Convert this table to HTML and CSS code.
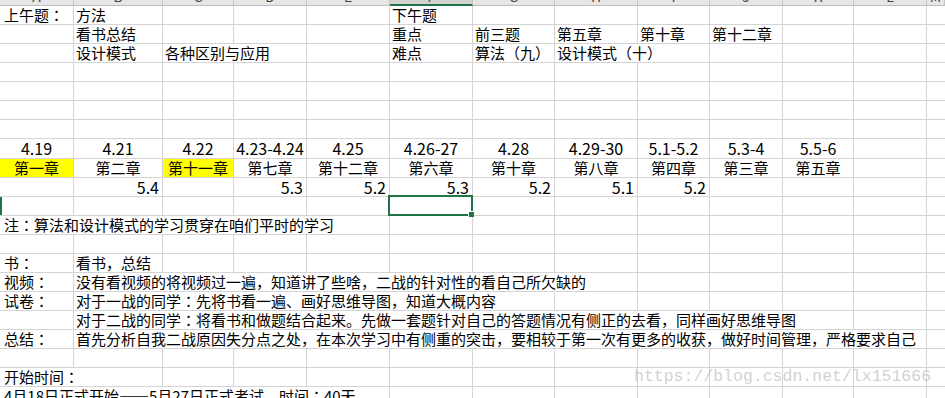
FILE: index.html
```html
<!DOCTYPE html>
<html lang="zh-CN">
<head>
<meta charset="utf-8">
<title>学习计划</title>
<link rel="stylesheet" href="styles.css">
</head>
<body>
<div class="sheet">
  <div class="hdr">
    <span><b>A</b></span><span><b>B</b></span><span><b>C</b></span><span><b>D</b></span><span><b>E</b></span><span class="on"><b>F</b></span><span><b>G</b></span><span><b>H</b></span><span><b>I</b></span><span><b>J</b></span><span><b>K</b></span><span><b>L</b></span><span><b>M</b></span>
  </div>
  <!-- 1 -->
  <div class="row"><span>上午题<i class="p" lang="ja">：</i></span><span>方法</span><span></span><span></span><span></span><span>下午题</span><span></span><span></span><span></span><span></span><span></span><span></span><span></span></div>
  <!-- 2 -->
  <div class="row"><span></span><span>看书总结</span><span></span><span></span><span></span><span>重点</span><span>前三题</span><span>第五章</span><span>第十章</span><span>第十二章</span><span></span><span></span><span></span></div>
  <!-- 3 -->
  <div class="row"><span></span><span>设计模式</span><span class="s2">各种区别与应用</span><span></span><span>难点</span><span>算法（九）</span><span class="s2">设计模式（十）</span><span></span><span></span><span></span><span></span></div>
  <!-- 4-7 -->
  <div class="row"><span></span><span></span><span></span><span></span><span></span><span></span><span></span><span></span><span></span><span></span><span></span><span></span><span></span></div>
  <div class="row"><span></span><span></span><span></span><span></span><span></span><span></span><span></span><span></span><span></span><span></span><span></span><span></span><span></span></div>
  <div class="row"><span></span><span></span><span></span><span></span><span></span><span></span><span></span><span></span><span></span><span></span><span></span><span></span><span></span></div>
  <div class="row"><span></span><span></span><span></span><span></span><span></span><span></span><span></span><span></span><span></span><span></span><span></span><span></span><span></span></div>
  <!-- 8 -->
  <div class="row tall"><span class="ctr d">4.19</span><span class="ctr d">4.21</span><span class="ctr d">4.22</span><span class="ctr d">4.23-4.24</span><span class="ctr d">4.25</span><span class="ctr d">4.26-27</span><span class="ctr d">4.28</span><span class="ctr d">4.29-30</span><span class="ctr d">5.1-5.2</span><span class="ctr d">5.3-4</span><span class="ctr d">5.5-6</span><span></span><span></span></div>
  <!-- 9 -->
  <div class="row"><span class="ctr y">第一章</span><span class="ctr">第二章</span><span class="ctr y">第十一章</span><span class="ctr">第七章</span><span class="ctr">第十二章</span><span class="ctr">第六章</span><span class="ctr">第十章</span><span class="ctr">第八章</span><span class="ctr">第四章</span><span class="ctr">第三章</span><span class="ctr">第五章</span><span></span><span></span></div>
  <!-- 10 -->
  <div class="row"><span></span><span class="num">5.4</span><span></span><span class="num">5.3</span><span class="num">5.2</span><span class="num">5.3</span><span class="num">5.2</span><span class="num">5.1</span><span class="num">5.2</span><span></span><span></span><span></span><span></span></div>
  <!-- 11 -->
  <div class="row"><span class="edge"></span><span></span><span></span><span></span><span></span><span class="sel"></span><span></span><span></span><span></span><span></span><span></span><span></span><span></span></div>
  <!-- 12 -->
  <div class="row"><span class="s5">注<i class="p" lang="ja">：</i>算法和设计模式的学习贯穿在咱们平时的学习</span><span></span><span></span><span></span><span></span><span></span><span></span><span></span><span></span></div>
  <!-- 13 -->
  <div class="row"><span></span><span></span><span></span><span></span><span></span><span></span><span></span><span></span><span></span><span></span><span></span><span></span><span></span></div>
  <!-- 14 -->
  <div class="row"><span>书<i class="p" lang="ja">：</i></span><span>看书，总结</span><span></span><span></span><span></span><span></span><span></span><span></span><span></span><span></span><span></span><span></span><span></span></div>
  <!-- 15 -->
  <div class="row"><span>视频<i class="p" lang="ja">：</i></span><span class="s7">没有看视频的将视频过一遍，知道讲了些啥，二战的针对性的看自己所欠缺的</span><span></span><span></span><span></span><span></span><span></span></div>
  <!-- 16 -->
  <div class="row"><span>试卷<i class="p" lang="ja">：</i></span><span class="s6">对于一战的同学<i class="p" lang="ja">：</i>先将书看一遍、画好思维导图，知道大概内容</span><span></span><span></span><span></span><span></span><span></span><span></span></div>
  <!-- 17 -->
  <div class="row"><span></span><span class="s10">对于二战的同学<i class="p" lang="ja">：</i>将看书和做题结合起来。先做一套题针对自己的答题情况有侧正的去看，同样画好思维导图</span><span></span><span></span></div>
  <!-- 18 -->
  <div class="row"><span>总结<i class="p" lang="ja">：</i></span><span class="s11">首先分析自我二战原因失分点之处，在本次学习中有侧重的突击，要相较于第一次有更多的收获，做好时间管理，严格要求自己</span><span></span></div>
  <!-- 19 -->
  <div class="row"><span></span><span></span><span></span><span></span><span></span><span></span><span></span><span></span><span></span><span></span><span></span><span></span><span></span></div>
  <!-- 20 -->
  <div class="row"><span class="s2">开始时间<i class="p" lang="ja">：</i></span><span></span><span></span><span></span><span></span><span></span><span></span><span></span><span></span><span></span><span></span><span></span></div>
  <!-- 21 -->
  <div class="row"><span class="s5">4月18日正式开始——5月27日正式考试，时间<i class="p" lang="ja">：</i>40天</span><span></span><span></span><span></span><span></span><span></span><span></span><span></span><span></span></div>
</div>
<div class="watermark">https://blog.csdn.net/lx151666</div>
</body>
</html>
```
FILE: styles.css
```css
html, body {
  margin: 0;
  padding: 0;
  background: #fff;
  overflow: hidden;
}
body {
  width: 945px;
  height: 398px;
  position: relative;
  font-family: "Noto Sans CJK SC", sans-serif;
  font-size: 15px;
  color: #000;
}
.sheet {
  width: 945px;
}
.hdr, .row {
  display: grid;
  grid-template-columns: 74px 89px 71px 73px 83px 83px 82px 83px 72px 73px 71px 73px 1fr;
}
.hdr {
  height: 6px;
  background: #e6e6e6;
}
.hdr > span {
  border-right: 1px solid #c6c6c6;
  border-bottom: 1px solid #bdbdbd;
  overflow: hidden;
  text-align: center;
  font-size: 14px;
  line-height: 20px;
  color: #444;
}
.hdr > span b {
  display: block;
  font-weight: normal;
  margin-top: -14px;
}
.hdr > span.on {
  background: #d2d2d2;
  border-bottom: 2px solid #217346;
  color: #217346;
}
.row {
  height: 19px;
}
.row.tall {
  height: 20px;
}
.row > span {
  border-right: 1px solid #d4d4d4;
  border-bottom: 1px solid #d4d4d4;
  white-space: nowrap;
  line-height: 18px;
  padding: 0 2px;
  min-width: 0;
}
.row > span:first-child {
  padding-left: 4px;
}
.row > span:last-child {
  border-right: none;
}
.p {
  font-style: normal;
  font-family: "Noto Sans CJK JP", "Noto Sans CJK SC", sans-serif;
}
.ctr {
  text-align: center;
}
.row > span.ctr {
  padding: 0;
}
.num {
  text-align: right;
  font-size: 16px;
}
.row > span.num {
  padding-right: 3px;
}
.d {
  font-size: 16px;
}
.y {
  background: #ffff00;
}
.s2 { grid-column: span 2; }
.s5 { grid-column: span 5; }
.s6 { grid-column: span 6; }
.s7 { grid-column: span 7; }
.s10 { grid-column: span 10; }
.s11 { grid-column: span 11; }
.edge {
  box-shadow: inset 2px 0 0 #217346;
}
.sel {
  position: relative;
}
.sel::after {
  content: "";
  position: absolute;
  left: -2px;
  top: -2px;
  right: -1px;
  bottom: -1px;
  border: 2px solid #217346;
}
.sel::before {
  content: "";
  position: absolute;
  right: -2px;
  bottom: -2px;
  width: 5px;
  height: 5px;
  background: #217346;
  border-left: 1px solid #fff;
  border-top: 1px solid #fff;
  z-index: 1;
}
.watermark {
  position: absolute;
  left: 634px;
  top: 369px;
  font-family: "Liberation Mono", monospace;
  font-size: 16.5px;
  line-height: 16.5px;
  color: rgba(170, 170, 170, 0.55);
  white-space: nowrap;
  letter-spacing: 0;
}
```
